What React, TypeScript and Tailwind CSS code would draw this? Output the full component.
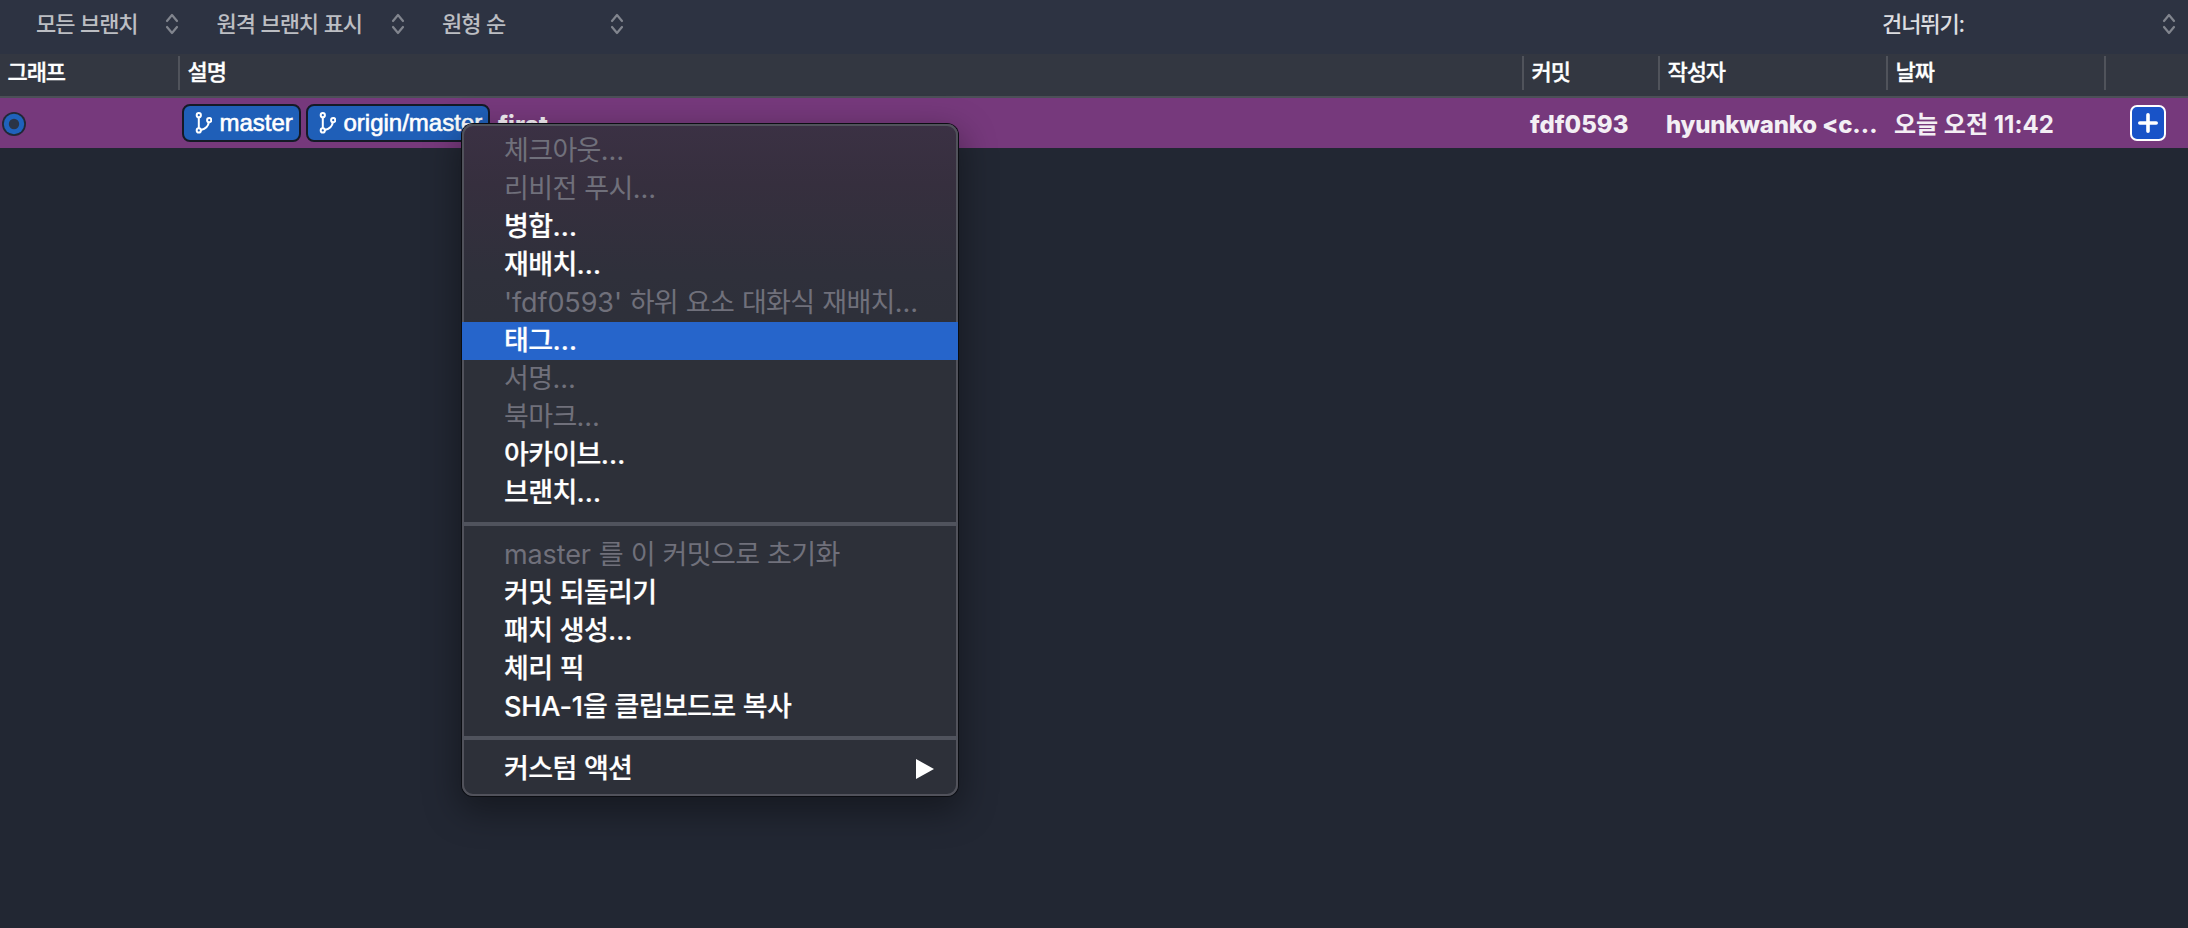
import { Fragment, type ReactNode } from "react";

type Item = { label: string; disabled?: boolean; active?: boolean; submenu?: boolean };

const groups: Item[][] = [
  [
    { label: "체크아웃…", disabled: true },
    { label: "리비전 푸시…", disabled: true },
    { label: "병합…" },
    { label: "재배치…" },
    { label: "'fdf0593' 하위 요소 대화식 재배치…", disabled: true },
    { label: "태그…", active: true },
    { label: "서명…", disabled: true },
    { label: "북마크…", disabled: true },
    { label: "아카이브…" },
    { label: "브랜치…" },
  ],
  [
    { label: "master 를 이 커밋으로 초기화", disabled: true },
    { label: "커밋 되돌리기" },
    { label: "패치 생성…" },
    { label: "체리 픽" },
    { label: "SHA-1을 클립보드로 복사" },
  ],
  [{ label: "커스텀 액션", submenu: true }],
];

/** Latin runs are set without the tightened tracking that the Hangul uses. */
function Label({ text }: { text: string }) {
  return (
    <span>
      {text.split(/([!-~]+)/).map((run, i) =>
        i % 2 === 1 ? (
          <span key={i} className="tracking-[-0.1px]">
            {run}
          </span>
        ) : (
          <Fragment key={i}>{run}</Fragment>
        ),
      )}
    </span>
  );
}

function Stepper() {
  return (
    <svg width="14" height="22" viewBox="0 0 14 22" fill="none" stroke="#81858e" strokeWidth="2.2" strokeLinecap="round" strokeLinejoin="round">
      <path d="M2 8 7 2l5 6M2 14l5 6 5-6" />
    </svg>
  );
}

function BranchIcon() {
  return (
    <svg width="18" height="22" viewBox="0 0 18 22" fill="none" stroke="#fff" strokeWidth="2">
      <circle cx="4.800" cy="3.200" r="2.1" />
      <circle cx="4.800" cy="18.400" r="2.1" />
      <circle cx="15.200" cy="8.200" r="2.1" />
      <path d="M4.800 5.200v11M14.800 10.300c-.5 4-3.700 6.500-7.900 7.700" />
    </svg>
  );
}

function Badge({ children, width }: { children: ReactNode; width: string }) {
  return (
    <div className={`flex h-[38px] ${width} shrink-0 items-center rounded-lg border-2 border-[#141a26] bg-[#1f5fb8] pl-[10px] text-white`}>
      <BranchIcon />
      <span className="ml-[7.5px] font-['Liberation_Sans'] text-[24px] leading-none [-webkit-text-stroke:0.6px_white]">{children}</span>
    </div>
  );
}

function Head({ children, width, first }: { children?: ReactNode; width: string; first?: boolean }) {
  return (
    <div className={`relative flex h-full items-center pb-[7px] ${width} ${first ? "pl-[7.5px]" : "pl-[8.5px]"}`}>
      {!first && <span className="absolute top-[2px] left-0 h-[34px] w-[2px] -translate-x-px bg-[#50535b]" />}
      {children}
    </div>
  );
}

function Menu() {
  return (
    <div className="absolute top-[124px] left-[462px] w-[496px] rounded-[11px] bg-[linear-gradient(180deg,#3b3144_0px,#362f3e_60px,#2f303b_150px,#2d3039_230px,#2d3039_100%)] py-[8px] shadow-[0_0_0_1px_#0b0d12,0_12px_34px_4px_rgba(0,0,0,0.36)]">
      <div className="pointer-events-none absolute inset-0 rounded-[11px] border-2 border-[#51525b]" />
      {groups.map((items, g) => (
        <div key={g}>
          {g > 0 && <div className="relative mt-[10px] mb-[10px] h-[4px] bg-[#50535d]" />}
          {items.map((it) => (
            <div
              key={it.label}
              className={`relative flex h-[38px] items-center justify-between pr-[24px] pl-[42px] pb-px text-[27px] leading-none tracking-[-0.65px] [word-spacing:0.8px] whitespace-nowrap ${
                it.active ? "bg-[#2665cb]" : ""
              } ${it.disabled ? "font-normal text-[#70707b]" : "font-medium text-white [-webkit-text-stroke:0.2px_white]"}`}
            >
              <Label text={it.label} />
              {it.submenu && (
                <svg width="18" height="20" viewBox="0 0 18 20" fill="#fff">
                  <path d="M0 0 18 10 0 20z" />
                </svg>
              )}
            </div>
          ))}
        </div>
      ))}
    </div>
  );
}

export default function App() {
  return (
    <div className="relative flex h-[928px] w-[2188px] flex-col overflow-hidden bg-[#222733] font-[Inter,'Noto_Sans_CJK_KR',sans-serif]">
      <div className="flex h-[54px] shrink-0 items-center bg-[#2d3342] pb-[6px] text-[22px] leading-none font-medium tracking-[-1.1px] [word-spacing:1px] text-[#bcbec3]">
        <div className="flex w-[181px] items-center justify-between pr-[2px] pl-[36px]">
          <span className="-mt-px">모든 브랜치</span>
          <Stepper />
        </div>
        <div className="flex w-[226px] items-center justify-between pr-[2px] pl-[35.5px]">
          <span className="-mt-px">원격 브랜치 표시</span>
          <Stepper />
        </div>
        <div className="flex w-[219px] items-center justify-between pr-[2px] pl-[35px]">
          <span className="-mt-px">원형 순</span>
          <Stepper />
        </div>
        <div className="ml-auto flex w-[306px] items-center justify-between pr-[12px] text-[#dcdde0]">
          <span className="-mt-px">건너뛰기:</span>
          <Stepper />
        </div>
      </div>

      <div className="flex h-[44px] shrink-0 items-center border-b-2 border-[#4c4f57] bg-[#333741] text-[22px] leading-none font-medium tracking-[-1.1px] text-white [-webkit-text-stroke:0.3px_white]">
        <Head width="w-[179px]" first>그래프</Head>
        <Head width="w-[1344px]">설명</Head>
        <Head width="w-[136px]">커밋</Head>
        <Head width="w-[228px]">작성자</Head>
        <Head width="w-[218px]">날짜</Head>
        <Head width="w-[83px]" />
      </div>

      <div className="flex h-[50px] shrink-0 items-center bg-[#76397c] text-[24px] leading-none font-bold text-[#f3eff4]">
        <div className="w-[182px] pl-[2px]">
          <svg className="mt-[2px]" width="24" height="24" viewBox="0 0 24 24">
            <circle cx="12" cy="12" r="12" fill="#222836" />
            <circle cx="12" cy="12" r="10.200" fill="#1f62bc" />
            <circle cx="12" cy="12" r="5.200" fill="#2b3446" />
          </svg>
        </div>
        <div className="flex w-[1348px] items-center gap-[5px] font-normal">
          <Badge width="w-[119px]">master</Badge>
          <Badge width="w-[184px]">origin/master</Badge>
          <span className="mt-[3px] ml-[3px] font-extrabold">first</span>
        </div>
        <div className="mt-[3px] w-[136px] font-extrabold">fdf0593</div>
        <div className="mt-[3px] w-[228px] font-extrabold tracking-[-0.2px] whitespace-nowrap">hyunkwanko &lt;c…</div>
        <div className="mt-[3px] w-[236px] whitespace-nowrap">오늘 오전 11:42</div>
        <div className="flex h-[36px] w-[36px] items-center justify-center rounded-[7px] border-2 border-white bg-[#1853c8]">
          <svg width="20" height="20" viewBox="0 0 20 20" stroke="#fff" strokeWidth="3.600" strokeLinecap="round">
            <path d="M10 1.800v16.400M1.800 10h16.400" />
          </svg>
        </div>
      </div>

      <Menu />
    </div>
  );
}
